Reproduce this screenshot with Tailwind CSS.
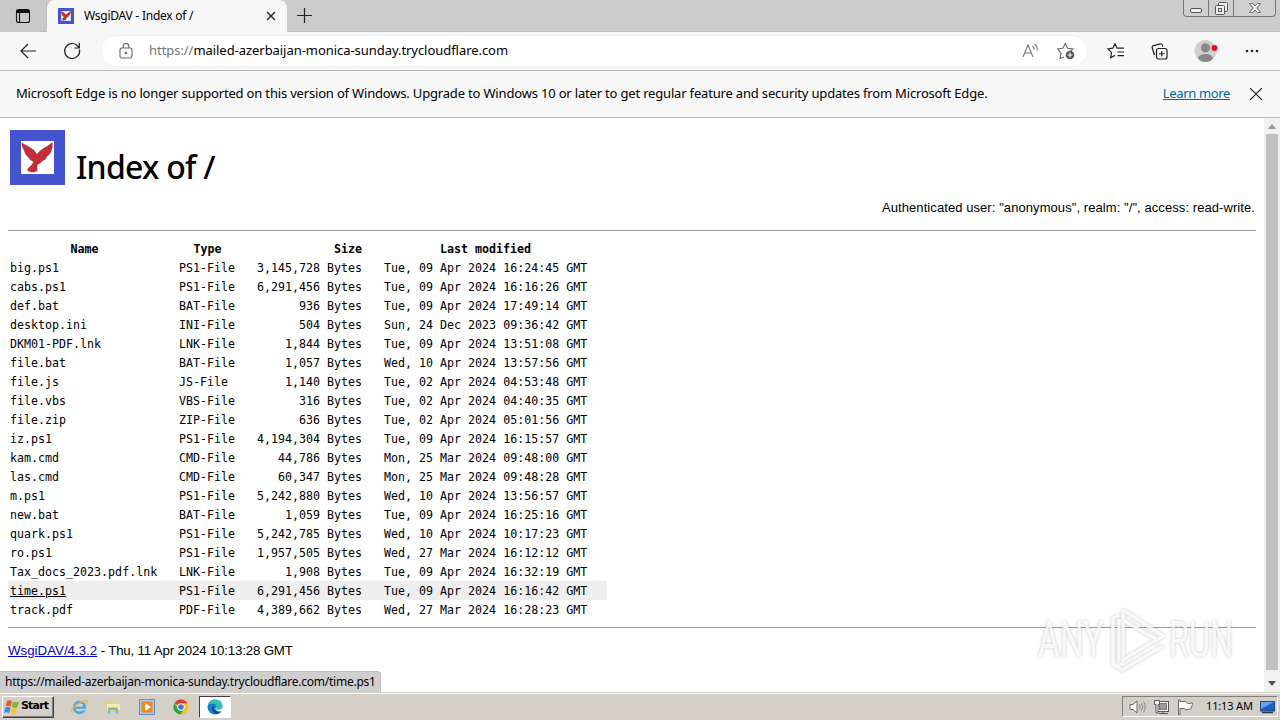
<!DOCTYPE html>
<html lang="en">

<head>
    <meta charset="UTF-8">
    <meta name="viewport" content="width=device-width, initial-scale=1.0">
    <title>WsgiDAV - Index of /</title>
    <script src="https://cdn.jsdelivr.net/npm/@tailwindcss/browser@4"></script>
</head>

<body class="w-[1280px] h-[720px] overflow-hidden flex flex-col bg-white text-black font-['Noto_Sans',sans-serif]">

    <!-- Tab strip -->
    <div class="h-8 shrink-0 flex items-start bg-[#cccccc] border-b border-[#bdbdbd]">
        <div class="w-[47px] h-8 flex items-center justify-center rounded-br-lg border-r border-[#bdbdbd] bg-[#c9c9c9]">
            <svg width="16" height="16" viewBox="0 0 16 16" fill="none" stroke="#111" stroke-width="1.1"><rect x="1.5" y="1.5" width="13" height="13" rx="2" /><path d="M2 3.5h12" stroke-width="3" /><path d="M4.500 5v9" /></svg>
        </div>
        <div class="w-[240px] h-8 flex items-center bg-[#f7f7f7] rounded-t-lg pl-[11px] pr-2">
            <svg width="16" height="16" viewBox="0 0 55 55"><rect width="55" height="55" fill="#4454cf" /><rect x="11" y="11" width="33" height="33" fill="#fff" /><path d="M11.5 12.5L22 17l5 7 5-5 11-6.500-1.500 8-5 7-4.500 4-5 4v5l-9 1.500-4-3 7-7.500-6-6z" fill="#c0302c" stroke="#c0302c" stroke-width="2" /></svg>
            <span class="ml-2.5 text-xs whitespace-nowrap tracking-[-0.24px]">WsgiDAV - Index of /</span>
            <svg class="ml-auto mr-[3px]" width="10" height="10" viewBox="0 0 10 10" stroke="#222" stroke-width="1.4"><path d="M1 1l8 8M9 1l-8 8" /></svg>
        </div>
        <div class="flex-1 h-8 flex items-center pl-2.5 bg-[#cccccc] border-b border-[#bdbdbd]">
            <svg width="15" height="15" viewBox="0 0 15 15" stroke="#222" stroke-width="1.2"><path d="M0 7.5h15M7.5 0v15" /></svg>
        </div>
        <div class="h-8 pr-1 bg-[#cccccc] border-b border-[#bdbdbd]">
            <div class="w-[93px] h-[17px] flex border border-t-0 border-[#777] rounded-b-[4px] bg-[#cfcfcf]">
                <div class="w-[25px] border-r border-[#777] flex justify-center pt-2">
                    <svg width="12" height="5" viewBox="0 0 12 5"><rect x=".5" y=".5" width="11" height="4" rx="1.5" fill="#eee" stroke="#555" /></svg>
                </div>
                <div class="w-[25px] border-r border-[#777] flex justify-center pt-0.5">
                    <svg width="13" height="13" viewBox="0 0 13 13" fill="#eee" stroke="#555"><rect x="3.5" y=".5" width="9" height="9" rx="1" /><rect x=".5" y="3.5" width="9" height="9" rx="1" /><rect x="3.5" y="6.5" width="3" height="3" /></svg>
                </div>
                <div class="flex-1 flex justify-center pt-[3px]">
                    <svg width="12" height="10" viewBox="0 0 12 10" fill="#eee" stroke="#666" stroke-width=".9"><path d="M.5.5h3.3L6 3 8.200.5h3.300L7.800 5l3.700 4.500H8.200L6 7 3.800 9.500H.5L4.200 5z" /></svg>
                </div>
            </div>
        </div>
    </div>

    <!-- Toolbar -->
    <div class="h-[39px] shrink-0 flex items-center bg-[#f7f7f7] border-b border-[#bababa]">
        <svg class="ml-5" width="16" height="16" viewBox="0 0 16 16" fill="none" stroke="#222" stroke-width="1.2"><path d="M16 8H1M8 1L1 8l7 7" /></svg>
        <svg class="ml-[27px]" width="18" height="18" viewBox="0 0 18 18" fill="none" stroke="#222" stroke-width="1.2"><path d="M16.500 7.500A7.500 7.500 0 1 1 13.600 3L16 5.500M16.300 1v5h-5" /></svg>
        <div class="ml-[19px] w-[988px] h-8 flex items-center bg-white rounded-full border border-[#f0f0f0]">
            <svg class="ml-[18px]" width="14" height="16" viewBox="0 0 14 16" fill="none" stroke="#666" stroke-width="1.1"><rect x="1" y="5" width="12" height="10" rx="1.800" /><path d="M4.200 5V3.300a2.800 2.800 0 0 1 5.600 0V5" /><circle cx="7" cy="10" r=".7" fill="#666" /></svg>
            <span class="ml-4 text-[13px] tracking-[-0.050px] whitespace-nowrap"><span class="text-[#757575]">https://</span>mailed-azerbaijan-monica-sunday.trycloudflare.com</span>
            <svg class="ml-auto" width="18" height="16" viewBox="0 0 18 16" fill="none" stroke="#777" stroke-width="1.100"><path d="M1 14L6 2l5 12M2.700 10h6.600M10.500 3q2 1.500 1.500 4M12.500 1q3.500 2.500 2.500 6.500" /></svg>
            <svg class="ml-[17px] mr-[12px]" width="18" height="18" viewBox="0 0 18 18" fill="none" stroke="#666" stroke-width="1.100"><path d="M7 15l-4 1.500 1-5.500L.8 7l5-.8L8.300 1.500l2.300 4.700 5.200.8-2 2" /><circle cx="13" cy="13" r="4.300" fill="#555" stroke="none" /><path d="M13 10.600v4.800M10.600 13h4.800" stroke="#fff" /></svg>
        </div>
        <svg class="ml-[19px]" width="18" height="16" viewBox="0 0 18 16" fill="none" stroke="#222" stroke-width="1.200"><path d="M17 5.200H10L8 .8 5.800 5.200 1 6l3.500 3.700-.8 5L8 12.400M10.500 9H17M10.500 12.600H17" /></svg>
        <svg class="ml-[26px]" width="17" height="17" viewBox="0 0 17 17" fill="none" stroke="#222" stroke-width="1.200"><path d="M3.500 12L1.300 5q-.6-1.800 1.200-2.300L9.300.8q1.500-.3 2 1.200l.5 1.500" /><rect x="5.500" y="5.500" width="10.500" height="10.500" rx="2" fill="#f7f7f7" /><path d="M10.750 8v5.500M8 10.750h5.500" /></svg>
        <svg class="ml-[26px]" width="24" height="24" viewBox="0 0 24 24"><circle cx="11.500" cy="12" r="11" fill="#d2d0ce" /><circle cx="11.500" cy="8.800" r="4.600" fill="#888" /><path d="M4 19.500q1-4.500 7.500-4.500t7.500 4.500Q16 23 11.500 23T4 19.500z" fill="#888" /><circle cx="20.500" cy="9" r="3" fill="#e3101b" /></svg>
        <svg class="ml-[27px]" width="14" height="4" viewBox="0 0 14 4" fill="#222"><circle cx="2" cy="2" r="1.300" /><circle cx="7" cy="2" r="1.300" /><circle cx="12" cy="2" r="1.300" /></svg>
    </div>

    <!-- Info bar -->
    <div class="h-[47px] shrink-0 flex items-center bg-[#f7f7f7] border-b border-[#bababa] pl-4 pr-[18px] text-[13px]">
        <span class="whitespace-nowrap tracking-[-0.178px]">Microsoft Edge is no longer supported on this version of Windows. Upgrade to Windows 10 or later to get regular feature and security updates from Microsoft Edge.</span>
        <a class="ml-auto text-[#0067b0] underline whitespace-nowrap tracking-[-0.350px]">Learn more</a>
        <svg class="ml-5" width="12" height="12" viewBox="0 0 12 12" stroke="#222" stroke-width="1.200"><path d="M0 0l12 12M12 0L0 12" /></svg>
    </div>

    <!-- Page -->
    <div class="relative flex-1 flex min-h-0">
        <div class="flex-1 px-2 font-['Liberation_Sans',sans-serif] text-[13px]">
            <div class="h-[78px] flex pt-3 pl-0.5">
                <svg width="55" height="55" viewBox="0 0 55 55"><rect width="55" height="55" fill="#4454cf" /><rect x="11" y="11" width="33" height="33" fill="#fff" /><path d="M11.500 12.500q5 3 9 5 4 2 6.500 6.500 2-3 6-5.500 6-3 9.500-6.500.5 5-1 9-1.500 4-4.500 5.500-1 3.500-4.500 4.500-2 2.500-5 4-.5 2 0 6l-3 1-3 .5-4.500-2q1-3 4-5l2.500-3.500q-4-2-6-5.500-3-2.500-3.500-6-2.500-4-2.500-8z" fill="#bf303a" /></svg>
                <h1 class="ml-[11px] mt-[13px] h-12 leading-[48px] text-[32px] tracking-[-0.750px] font-medium whitespace-nowrap font-['Noto_Sans',sans-serif]">Index of /</h1>
            </div>
            <p class="h-[34px] leading-6 text-right pr-px tracking-[0.075px]">Authenticated user: "anonymous", realm: "/", access: read-write.</p>
            <hr class="border-t border-[#999]">
            <div id="listing" class="mt-2 w-[599px] font-['DejaVu_Sans_Mono',monospace] text-[11.650px] leading-[21px]">
                <div class="h-[19px] flex font-bold">
                    <div class="w-[169px] pr-4 text-center">Name</div>
                    <div class="w-[61px] text-center">Type</div>
                    <div class="w-[126px] pr-0.5 text-right">Size</div>
                    <div class="ml-[18px] w-[207px] text-center">Last modified</div>
                </div>
            </div>
            <hr class="mt-2 border-t border-[#999]">
            <p class="mt-[13px] leading-5 text-[13.300px]"><a class="text-[#0000cc] underline">WsgiDAV/4.3.2</a><span class="tracking-[-0.180px]"> - Thu, 11 Apr 2024 10:13:28 GMT</span></p>
        </div>

        <!-- Scrollbar -->
        <div class="w-4 bg-[#f1f1f1] flex flex-col items-center">
            <div class="h-4 flex items-center"><svg width="8" height="5" viewBox="0 0 8 5"><path d="M4 0l4 5H0z" fill="#999" /></svg></div>
            <div class="w-3 h-[536px] bg-[#c1c1c1]"></div>
            <div class="flex-1 flex items-center pt-1"><svg width="8" height="5" viewBox="0 0 8 5"><path d="M0 0h8L4 5z" fill="#505050" /></svg></div>
        </div>

        <!-- Watermark -->
        <div class="absolute left-[1038px] top-[488px] w-[200px] h-[68px] flex items-center font-['Roboto',sans-serif] font-normal text-[50px] leading-none text-white/85 [filter:drop-shadow(0_0_1.500px_rgba(0,0,0,.28))]">
            <span class="w-[72px] shrink-0 origin-left scale-x-[.67]">ANY</span>
            <svg class="shrink-0" width="56" height="66" viewBox="0 0 56 66" fill="none" stroke="#fff" stroke-opacity=".85" stroke-width="3.500"><path d="M9 8L3 11v46l9 6 41-24M13 3v50l40-24L13 3v0M13 13l36 21M9 12v42" /></svg>
            <span class="ml-[3px] w-[68px] origin-left scale-x-[.65]">RUN</span>
        </div>

        <!-- Link target -->
        <div class="absolute left-0 bottom-0 w-[381px] h-[21px] pl-[5px] bg-[#cfcfcf] border-t border-r border-[#bdbdbd] rounded-tr text-xs leading-5 tracking-[-0.250px] whitespace-nowrap">https://mailed-azerbaijan-monica-sunday.trycloudflare.com/time.ps1</div>
    </div>

    <!-- Taskbar -->
    <div class="h-7 shrink-0 flex items-center bg-[#d4d0c8] border-t border-[#d4d0c8] pl-0.5 pr-0.5 shadow-[inset_0_1px_0_#fff]">
        <div class="w-[52px] h-[22px] flex items-center border border-t-white border-l-white border-b-[#404040] border-r-[#404040] shadow-[inset_-1px_-1px_0_#808080]">
            <svg class="ml-px shrink-0" width="16" height="16" viewBox="0 0 16 16"><path d="M3 2q2.500-1.500 5 0L6.800 7.500Q4 6 1.500 7.500z" fill="#e8582a" /><path d="M9 2.500q3 1.500 6 0L13.500 8q-3 1.500-5.500 0z" fill="#7db832" /><path d="M1.300 8.500q2.500-1.500 5.200 0L5 14Q2.500 12.500 0 14z" fill="#3d8fdd" /><path d="M7.700 9q3 1.500 5.500 0L12 14.500q-3 1.500-5.800 0z" fill="#fbc52c" /></svg>
            <span class="ml-px font-['DejaVu_Sans',sans-serif] font-bold text-[11px] tracking-[-0.800px]">Start</span>
        </div>
        <svg class="ml-[17px]" width="17" height="16" viewBox="0 0 17 16" fill="none"><circle cx="8.500" cy="8.500" r="5.300" stroke="#45a8e6" stroke-width="2.800" /><path d="M5 8.800h9" stroke="#45a8e6" stroke-width="2.200" /><path d="M11 10.500h5" stroke="#d4d0c8" stroke-width="1.600" /><path d="M1.500 14.500Q-1 10 6 5.500T16 1.500q1 1-.5 3.500" stroke="#e9b93b" stroke-width="1.300" /></svg>
        <svg class="ml-[17px]" width="16" height="16" viewBox="0 0 16 16"><path d="M1 2h5l1 1.500h7V13H1z" fill="#e9cf75" /><path d="M2 5h13v6H2z" fill="#f8eaa8" /><path d="M3 15V9.500q0-1 1-1h8q1 0 1 1V15h-2v-4H5v4z" fill="#6fb6df" /></svg>
        <svg class="ml-[18px]" width="16" height="16" viewBox="0 0 16 16"><rect x=".5" y=".5" width="15" height="15" fill="#a9c8e6" stroke="#6293c2" /><rect x="2.500" y="2.500" width="11" height="11" rx="1" fill="#f08a18" /><path d="M6 4v8l6-4z" fill="#fff" /></svg>
        <svg class="ml-[18px]" width="16" height="16" viewBox="0 0 16 16"><circle cx="8" cy="8" r="7.500" fill="#fbc116" /><path d="M8 8L1.500 4.200A7.500 7.500 0 0 1 14.500 4.200H8z" fill="#e33b2e" /><path d="M1.500 4.200A7.500 7.500 0 0 0 7.500 15.500L11 10 8 8 4.700 9.500z" fill="#2da04a" /><circle cx="8" cy="8" r="3.700" fill="#fff" /><circle cx="8" cy="8" r="2.800" fill="#3b78e7" /></svg>
        <div class="ml-[10px] w-8 h-[22px] flex items-center justify-center bg-white border border-t-[#404040] border-l-[#404040] border-b-white border-r-white">
            <svg width="16" height="16" viewBox="0 0 16 16"><circle cx="8" cy="8" r="7.500" fill="#1683d2" /><path d="M.8 6Q3 .5 8 .5q7 0 7.500 6 0 4-4.500 4-2.500 0-1.500-2.500Q9.500 4.500 6 4.500 3 4.500.8 6z" fill="#35c1b0" /><path d="M6 6q-3 4 1 8 2 1.500 4 1Q14 13.500 14.500 12q-3 1.200-5.500-.5Q6.500 10 6.500 7z" fill="#0d4d92" /><path d="M9.300 8q-.8 2.500 1.700 2.700 3 0 4.500-2.200l-.5 3.500q-3 1-5.500-.5Q7.500 10 9.300 8z" fill="#fff" /></svg>
        </div>
        <div class="ml-auto w-[156px] h-[21px] flex items-center border border-t-[#808080] border-l-[#808080] border-b-white border-r-white">
            <svg class="ml-[6px]" width="17" height="16" viewBox="0 0 17 16" fill="none" stroke="#666"><path d="M1 5.500h3L8 2v12l-4-3.500H1z" fill="#fff" /><path d="M10.500 5.500q1.500 2.500 0 5M12.500 4q2.500 4 0 8M14.500 2.500q3.500 5.500 0 11" stroke="#888" /></svg>
            <svg class="ml-[7px]" width="17" height="16" viewBox="0 0 17 16" stroke="#555"><rect x="4.500" y="2.500" width="11" height="10" fill="#fff" /><rect x="6.500" y="4.500" width="7" height="6" fill="#999" stroke="#777" /><path d="M6 14.500h9M10 12.500v2" /><path d="M1.500 1.500h5v4h-1.500V14h-2V5.500h-1.500z" fill="#fff" /></svg>
            <svg class="ml-[7px]" width="17" height="16" viewBox="0 0 17 16" fill="#fff" stroke="#666"><path d="M1.500 1v14.500h1.500V9.500h4.500l1 1.500 5-1q2-3 2-6l-5 .5-2-2H3V1z" /></svg>
            <span class="ml-[12px] text-[11px] tracking-[-0.150px] whitespace-nowrap">11:13 AM</span>
            <svg class="ml-auto mr-0.5" width="15" height="14" viewBox="0 0 15 14"><rect x=".5" y="1.500" width="14" height="9.500" fill="#1c5fc0" stroke="#264a80" /><path d="M1 2h13L1 9z" fill="#64a5ee" /><path d="M2 12.500h11" stroke="#333" stroke-width="1.500" /></svg>
        </div>
    </div>

<script>
const files = [
    ['big.ps1', 'PS1-File', '3,145,728', 'Tue, 09 Apr 2024 16:24:45 GMT'],
    ['cabs.ps1', 'PS1-File', '6,291,456', 'Tue, 09 Apr 2024 16:16:26 GMT'],
    ['def.bat', 'BAT-File', '936', 'Tue, 09 Apr 2024 17:49:14 GMT'],
    ['desktop.ini', 'INI-File', '504', 'Sun, 24 Dec 2023 09:36:42 GMT'],
    ['DKM01-PDF.lnk', 'LNK-File', '1,844', 'Tue, 09 Apr 2024 13:51:08 GMT'],
    ['file.bat', 'BAT-File', '1,057', 'Wed, 10 Apr 2024 13:57:56 GMT'],
    ['file.js', 'JS-File', '1,140', 'Tue, 02 Apr 2024 04:53:48 GMT'],
    ['file.vbs', 'VBS-File', '316', 'Tue, 02 Apr 2024 04:40:35 GMT'],
    ['file.zip', 'ZIP-File', '636', 'Tue, 02 Apr 2024 05:01:56 GMT'],
    ['iz.ps1', 'PS1-File', '4,194,304', 'Tue, 09 Apr 2024 16:15:57 GMT'],
    ['kam.cmd', 'CMD-File', '44,786', 'Mon, 25 Mar 2024 09:48:00 GMT'],
    ['las.cmd', 'CMD-File', '60,347', 'Mon, 25 Mar 2024 09:48:28 GMT'],
    ['m.ps1', 'PS1-File', '5,242,880', 'Wed, 10 Apr 2024 13:56:57 GMT'],
    ['new.bat', 'BAT-File', '1,059', 'Tue, 09 Apr 2024 16:25:16 GMT'],
    ['quark.ps1', 'PS1-File', '5,242,785', 'Wed, 10 Apr 2024 10:17:23 GMT'],
    ['ro.ps1', 'PS1-File', '1,957,505', 'Wed, 27 Mar 2024 16:12:12 GMT'],
    ['Tax_docs_2023.pdf.lnk', 'LNK-File', '1,908', 'Tue, 09 Apr 2024 16:32:19 GMT'],
    ['time.ps1', 'PS1-File', '6,291,456', 'Tue, 09 Apr 2024 16:16:42 GMT'],
    ['track.pdf', 'PDF-File', '4,389,662', 'Wed, 27 Mar 2024 16:28:23 GMT'],
];
const hovered = 'time.ps1';

let html = '';
files.forEach(([name, type, size, date]) => {
    html += `<div class="h-[19px] flex whitespace-pre ${name === hovered ? 'bg-[#eeeeee]' : ''}">
                <div class="w-[169px] pl-0.5"><a class="${name === hovered ? 'underline' : ''}">${name}</a></div>
                <div class="w-[61px] pl-0.5">${type}</div>
                <div class="w-[126px] pr-0.5 text-right">${size} Bytes</div>
                <div class="ml-[18px] pl-0.5">${date}</div>
            </div>`;
});
document.getElementById('listing').insertAdjacentHTML('beforeend', html);
</script>
</body>

</html>
